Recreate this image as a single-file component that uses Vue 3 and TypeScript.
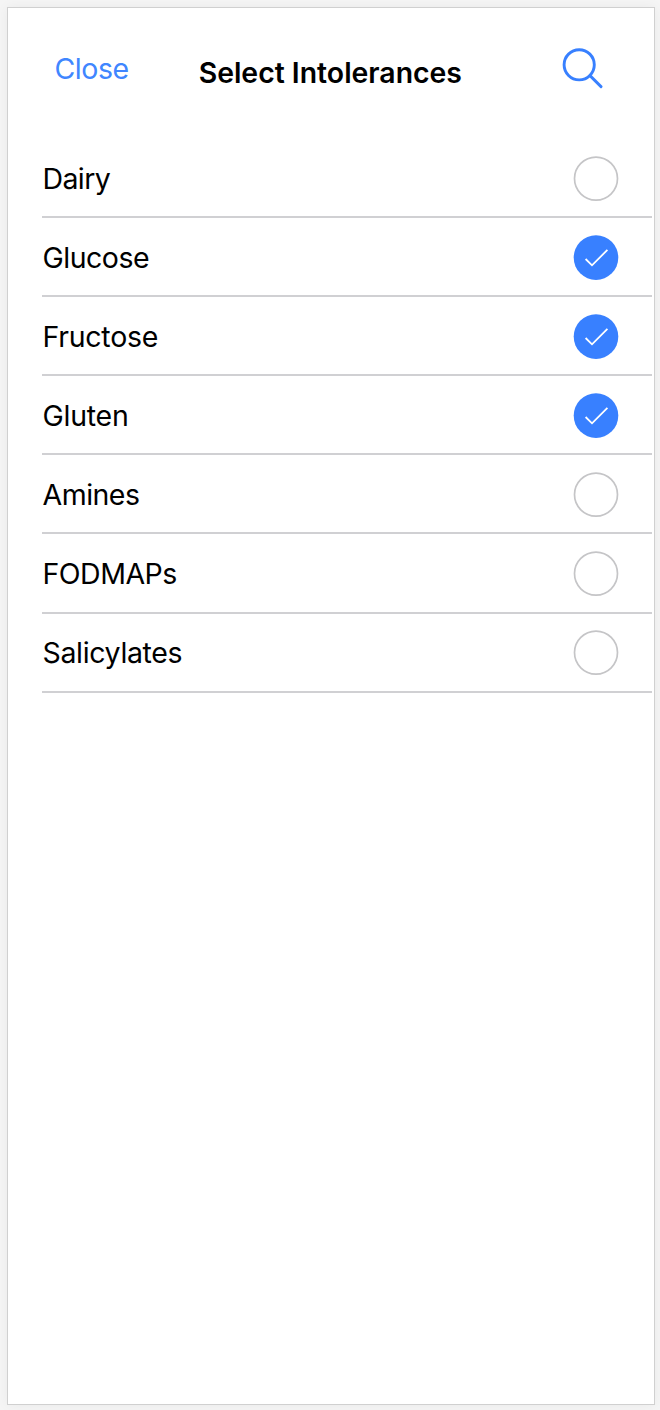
<script setup lang="ts">
import { ref } from 'vue'

interface Intolerance {
  name: string
  selected: boolean
  key: string
}

const items = ref<Intolerance[]>([
  { name: 'Dairy', selected: false, key: 'dairy' },
  { name: 'Glucose', selected: true, key: 'glucose' },
  { name: 'Fructose', selected: true, key: 'fructose' },
  { name: 'Gluten', selected: true, key: 'gluten' },
  { name: 'Amines', selected: false, key: 'amines' },
  { name: 'FODMAPs', selected: false, key: 'fodmaps' },
  { name: 'Salicylates', selected: false, key: 'salicylates' },
])

function toggle(item: Intolerance): void {
  item.selected = !item.selected
}
</script>

<template>
  <div class="page">
    <main class="sheet">
      <header class="bar">
        <button class="close" type="button">Close</button>
        <h1 class="title">Select Intolerances</h1>
        <button class="search" type="button" aria-label="Search">
          <svg width="42" height="42" viewBox="0 0 42 42">
            <circle cx="18.2" cy="17.8" r="15.1" />
            <path d="M29 28.6 40 39.6" />
          </svg>
        </button>
      </header>
      <ul class="list">
        <li v-for="item in items" :key="item.key" class="row" @click="toggle(item)">
          <span class="name" :class="item.key">{{ item.name }}</span>
          <svg class="mark" :class="{ on: item.selected }" width="46" height="46" viewBox="0 0 46 46">
            <circle cx="23" cy="22.6" :r="item.selected ? 22.3 : 21.5" />
            <path v-if="item.selected" d="M12.6 24 19 30.3 34.4 14.9" />
          </svg>
        </li>
      </ul>
    </main>
  </div>
</template>

<style>
body {
  margin: 0;
  background: #f3f3f3;
}
</style>

<style scoped>
.page {
  box-sizing: border-box;
  height: 1410px;
  padding: 7px 5px 5px 7px;
  overflow: hidden;
  background: #f5f5f5;
  font-family: Inter, "Liberation Sans", sans-serif;
}

.sheet {
  box-sizing: border-box;
  height: 1398px;
  border: 1px solid #d0d0d0;
  background: #fff;
  box-shadow: 0 0 12px rgba(0, 0, 0, 0.05);
}

.bar {
  display: grid;
  grid-template-columns: 144px 1fr 93px;
  box-sizing: border-box;
  height: 131px;
  padding: 39px 0 0 46.5px;
  align-items: start;
}

button {
  margin: 0;
  padding: 0;
  border: 0;
  background: none;
  font: inherit;
  text-align: left;
}

.close {
  color: #4086ff;
  font-size: 28.5px;
  letter-spacing: -0.45px;
  line-height: 43px;
}

.title {
  margin: 4px 0 0 0.2px;
  font-size: 28.4px;
  font-weight: 600;
  line-height: 43px;
  white-space: nowrap;
}

.search {
  height: 42px;
}

.search svg {
  display: block;
  fill: none;
  stroke: #3880ff;
  stroke-width: 2.9;
  stroke-linecap: round;
}

.list {
  margin: 0 2px 0 34px;
  padding: 0;
  list-style: none;
}

.row {
  display: flex;
  box-sizing: border-box;
  height: 79.1px;
  padding: 2px 32.7px 0 0;
  align-items: center;
  justify-content: space-between;
  border-bottom: 2px solid #d0d0d3;
}

.name {
  padding: 0.6px 0 0 0.5px;
  font-size: 28.5px;
  line-height: 40px;
}

.dairy {
  letter-spacing: -0.6px;
}

.glucose {
  letter-spacing: -0.5px;
}

.fructose,
.gluten {
  letter-spacing: -0.25px;
}

.amines,
.fodmaps {
  letter-spacing: -0.5px;
}

.salicylates {
  letter-spacing: -0.35px;
}

.mark {
  display: block;
  fill: #fff;
  stroke: #c5c5c7;
  stroke-width: 1.7;
}

.mark.on circle {
  fill: #3880ff;
  stroke: none;
}

.mark.on path {
  fill: none;
  stroke: #fff;
  stroke-width: 1.8;
}
</style>
